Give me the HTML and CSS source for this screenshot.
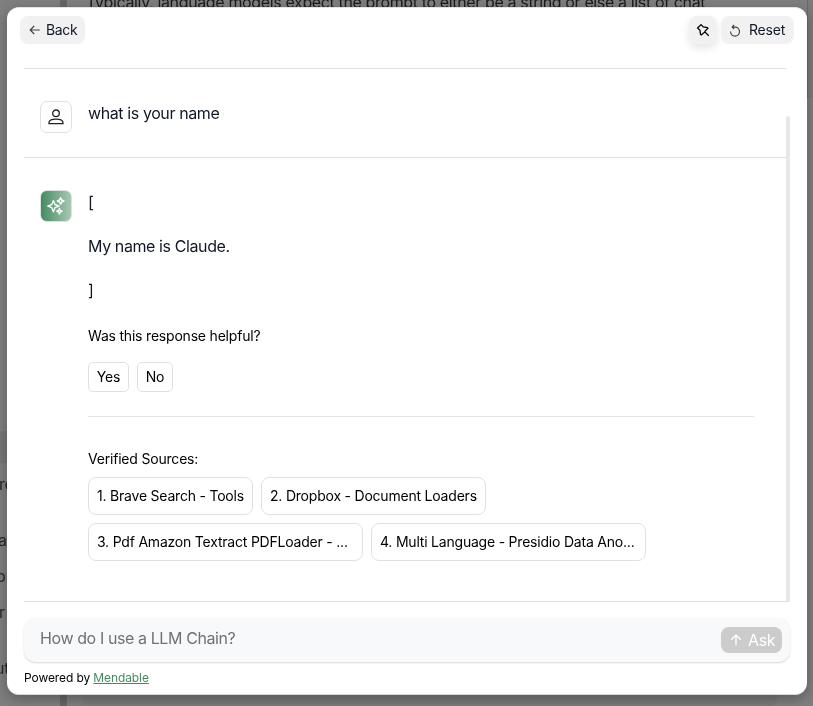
FILE: index.html
```
<!DOCTYPE html>
<html lang="en">
<head>
<meta charset="utf-8">
<title>Mendable chat</title>
<link rel="stylesheet" href="styles.css">
</head>
<body>
<div class="backdrop">
  <div class="bar bar-top"></div>
  <div class="bar bar-bottom"></div>
  <div class="band"></div>
  <div class="code-edge"></div>
  <div class="page-scroll"></div>
  <p class="page-text">Typically, language models expect the prompt to either be a string or else a list of chat</p>
  <span class="side s1">re</span>
  <span class="side s2">at</span>
  <span class="side s3">p</span>
  <span class="side s4">r</span>
  <span class="side s5">ut</span>
</div>
<main class="modal">
  <header class="top">
    <button class="btn back">
      <svg width="12" height="12" viewBox="0 0 12 12"><path d="M5.2 2 1.2 6l4 4M1.2 6h9.6"/></svg><span>Back</span>
    </button>
    <div class="actions">
      <button class="btn pin" aria-label="Pin">
        <svg width="14" height="14" viewBox="0 0 14 14"><path d="M5 1.6 7.3 4 11.3 4.5 11.9 5.3 9 8.3 8.9 8.9 5.3 11.9 4.5 11.3 4 7.3 1.6 5ZM8.6 8.6 12.7 12.7"/></svg>
      </button>
      <button class="btn reset">
        <svg width="12" height="13" viewBox="0 0 12 13"><path d="M3.3 3.1H6a4.5 4.5 0 1 1-4.5 4.5M5.2 1 3.1 3.1l2.1 2.1"/></svg><span>Reset</span>
      </button>
    </div>
  </header>
  <section class="chat">
    <div class="scrollbar"></div>
    <article class="message user">
      <div class="avatar">
        <svg width="16" height="16" viewBox="0 0 16 16"><circle cx="8" cy="4.3" r="3.3"/><path d="M1 14.7v-.9c0-2.3 2.5-3.7 7-3.7s7 1.4 7 3.7v.9Z"/></svg>
      </div>
      <p>what is your name</p>
    </article>
    <article class="message answer">
      <div class="avatar green">
        <svg width="18" height="18" viewBox="0 0 18 18"><path d="M6.4 3.4 8 7.5l4 1.6-4 1.6-1.6 4.1-1.6-4.1-4-1.6 4-1.6ZM13.6.7l1 2.3 2.4 1-2.4 1-1 2.3-1-2.3-2.3-1 2.3-1ZM12.4 11.5l.8 1.9 1.9.8-1.9.8-.8 1.9-.8-1.9-1.9-.8 1.9-.8Z"/></svg>
      </div>
      <div class="content">
        <p>[</p>
        <p>My name is Claude.</p>
        <p>]</p>
        <div class="helpful">Was this response helpful?</div>
        <div class="votes"><button>Yes</button><button>No</button></div>
        <hr>
        <div class="sources-title">Verified Sources:</div>
        <div class="sources">
          <a class="w1">1. Brave Search - Tools</a>
          <a class="w2">2. Dropbox - Document Loaders</a>
          <a class="w3">3. Pdf Amazon Textract PDFLoader - ...</a>
          <a class="w3">4. Multi Language - Presidio Data Ano...</a>
        </div>
      </div>
    </article>
  </section>
  <div class="ask-box">
    <span class="placeholder">How do I use a LLM Chain?</span>
    <button class="ask"><svg width="12" height="12" viewBox="0 0 12 12"><path d="M1.3 5.8 6 1.1l4.7 4.7M6 1.1v10.2"/></svg><span>Ask</span></button>
  </div>
  <footer>Powered by <a>Mendable</a></footer>
</main>
</body>
</html>
```
FILE: styles.css
```
* { box-sizing: border-box; }
body {
  margin: 0;
  width: 813px;
  height: 706px;
  overflow: hidden;
  background: #7f7f7f;
  font-family: Inter, "Liberation Sans", sans-serif;
  color: #111827;
  padding: 7px 7px 0;
}
p { margin: 0; }
button { font: inherit; color: inherit; border: 0; padding: 0; letter-spacing: inherit; }
svg { display: block; fill: none; stroke: currentColor; flex: none; }

.backdrop { position: fixed; inset: 0; overflow: hidden; }
.bar { position: absolute; left: 60px; width: 7px; height: 12px; background: #666; }
.bar-top { top: 0; }
.bar-bottom { bottom: 0; }
.band { position: absolute; left: 0; top: 431px; width: 8px; height: 32px; background: #777; }
.code-edge { position: absolute; left: 82px; right: 36px; bottom: 0; height: 30px; border-radius: 8px; background: #7a7a7a; }
.page-scroll { position: absolute; right: 0; top: 0; width: 6px; height: 98px; background: #7b7b7b; border-left: 1px solid #6a6a6a; }
.page-text { position: absolute; left: 86px; top: -8px; font-size: 16px; line-height: 20px; letter-spacing: -.365px; white-space: nowrap; color: #1c1c1c; }
.side { position: absolute; left: -1px; font-size: 16px; line-height: 20px; letter-spacing: -.3px; color: #25282e; }
.s1 { top: 474px; }
.s2 { top: 530px; left: -2px; }
.s3 { top: 566px; left: -4px; }
.s4 { top: 602px; }
.s5 { top: 658px; left: -5px; }

.modal {
  position: relative;
  width: 800px;
  height: 688px;
  background: #fff;
  border-radius: 12px;
  border-top: 1px solid #e4e4e4;
  border-bottom: 1px solid #d8d8d8;
  box-shadow: 0 4px 14px rgba(0, 0, 0, .3);
  padding: 8px 13px 0;
  display: flex;
  flex-direction: column;
}
.top { display: flex; justify-content: space-between; height: 52px; }
.actions { display: flex; gap: 4px; }
.btn {
  display: flex;
  align-items: center;
  height: 28px;
  border-radius: 8px;
  background: #f1f1f1;
  font-size: 14px;
  letter-spacing: -.2px;
}
.btn span { margin-top: -1px; }
.back { width: 65px; padding-left: 9px; gap: 5px; }
.back span { letter-spacing: -.35px; }
.back svg, .reset svg { stroke: #444; stroke-width: 1.2; }
.pin { width: 28px; justify-content: center; box-shadow: 0 4px 8px rgba(0, 0, 0, .1); }
.pin svg { stroke: #000; stroke-width: 1.3; }
.reset { width: 73px; padding-left: 8px; gap: 8px; }

.chat {
  position: relative;
  margin: 0 7px 0 4px;
  height: 534px;
  border-top: 1px solid #dfe0e3;
  border-bottom: 1px solid #dfe0e3;
}
.scrollbar { position: absolute; right: -3px; top: 47px; width: 4px; height: 486px; background: #e5e7eb; border-radius: 2px 2px 0 0; }
.message { display: flex; gap: 16px; padding: 32px 33px 0 16px; font-size: 16px; line-height: 24px; letter-spacing: -.4px; }
.user { height: 89px; border-bottom: 1px solid #dfe0e3; }
.avatar {
  width: 32px;
  height: 32px;
  flex: none;
  display: grid;
  place-items: center;
  border: 1px solid #e0e1e4;
  border-radius: 7px;
}
.avatar svg { stroke: #222; stroke-width: 1.3; }
.avatar.green { background: linear-gradient(90deg, #438c60, #a7c9b4); }
.avatar.green svg { stroke: #fff; stroke-width: 1.4; stroke-linejoin: round; }
.content { flex: 1; }
.content p { margin-bottom: 20px; }
.helpful { margin-top: 24px; }
.helpful, .sources-title { font-size: 14px; line-height: 20px; letter-spacing: -.2px; color: #000; }
.votes { display: flex; gap: 8px; margin-top: 16px; }
.votes button { width: 41px; height: 30px; border: 1px solid #e0e1e4; border-radius: 5px; background: #fff; color: #000; font-size: 14px; letter-spacing: -.2px; }
.votes button + button { width: 36px; }
hr { border: 0; height: 1px; background: #e2e3e8; margin: 24px 0 32px; }
.sources { display: flex; flex-wrap: wrap; gap: 8px; margin-top: 8px; }
.sources a { height: 38px; border: 1px solid #e0e1e4; border-radius: 8px; padding-left: 8px; line-height: 36px; font-size: 14px; letter-spacing: -.21px; color: #000; white-space: nowrap; }
.w1 { width: 165px; }
.w2 { width: 225px; margin-right: 100px; }
.w3 { width: 275px; }

.ask-box {
  margin: 16px 4px 0 4px;
  height: 44px;
  display: flex;
  align-items: center;
  justify-content: space-between;
  padding: 0 8px 0 16px;
  border-radius: 12px;
  background: #f8f9fb;
  box-shadow: 0 1px 2px rgba(0, 0, 0, .16);
}
.placeholder { font-size: 16px; line-height: 24px; letter-spacing: -.4px; color: #717171; margin-top: -4px; }
.ask { display: flex; align-items: center; width: 61px; height: 26px; padding-left: 9px; gap: 6px; border-radius: 8px; background: #ccc; color: #fff; font-size: 16px; letter-spacing: -.4px; }
.ask span { margin-top: -1px; }
.ask svg { stroke-width: 1.4; }
footer { margin: 8px 4px 0; font-size: 12px; line-height: 16px; letter-spacing: -.1px; color: #000; }
footer a { color: #438c60; text-decoration: underline; }
```
